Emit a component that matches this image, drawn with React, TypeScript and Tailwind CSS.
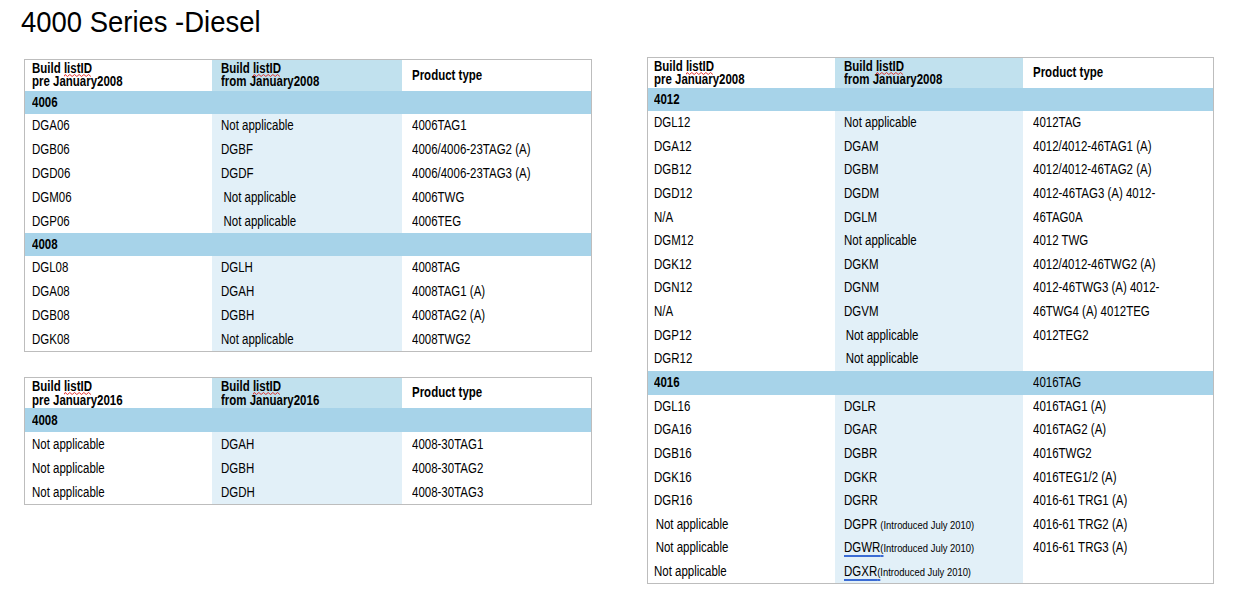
import React from 'react';

type Cell = React.ReactNode;
type Row = [Cell, Cell, Cell];
type Section = { label: string; product?: string; rows: Row[]; groupH: string };

type TableProps = {
  cols: string;
  rowH: string;
  headH: string;
  head: [string, string];
  sections: Section[];
  pad: [string, string, string];
};

// the source uses Arial Narrow, which isn't installed: squeeze Liberation Sans instead
const T = ({ children }: { children: React.ReactNode }) => (
  <span className="inline-block origin-left scale-x-[0.82] whitespace-nowrap">{children}</span>
);

const wave = Array.from({ length: 12 }, (_, i) => `L${i * 3 + 1.5} ${i % 2 ? 2.5 : 0.5}`).join(' ');

// spell-check squiggle under a word
const Squiggle = ({ children }: { children: React.ReactNode }) => (
  <span className="relative">
    {children}
    <svg
      className="absolute left-0 -bottom-[1px] w-full h-[3px] pointer-events-none"
      viewBox="0 0 36 3"
      preserveAspectRatio="none"
    >
      <path d={`M0 2.5 ${wave}`} stroke="#e0201c" strokeWidth="1" fill="none" vectorEffect="non-scaling-stroke" />
    </svg>
  </span>
);

const Intro = ({ id, gap }: { id: string; gap?: boolean }) =>
  gap ? (
    <>
      {id} <span className="text-[11.5px]">(Introduced July 2010)</span>
    </>
  ) : (
    <>
      <span className="underline decoration-[#3a6bd4] decoration-[1.5px] underline-offset-[3px]">
        {id}
        <span className="text-[11.5px]">(</span>
      </span>
      <span className="text-[11.5px]">Introduced July 2010)</span>
    </>
  );

const Table: React.FC<TableProps> = ({ cols, rowH, headH, head, sections, pad }) => {
  return (
    <div className="border border-[#bdbdbd] bg-white text-[14px] text-black">
      <div className={`grid ${cols} ${headH} font-bold leading-[13.4px]`}>
        <div className={`${pad[0]} pt-[2px]`}>
          <div className="origin-top-left scale-x-[0.82] whitespace-nowrap">
            Build <Squiggle>listID</Squiggle>
            <br />
            pre {head[0]}
          </div>
        </div>
        <div className={`${pad[1]} pt-[2px] bg-[#c1e1ee]`}>
          <div className="origin-top-left scale-x-[0.82] whitespace-nowrap">
            Build <Squiggle>listID</Squiggle>
            <br />
            from {head[1]}
          </div>
        </div>
        <div className={`${pad[2]} flex items-center`}>
          <T>Product type</T>
        </div>
      </div>
      {sections.map((s) => (
        <div key={s.label}>
          <div className={`grid ${cols} ${s.groupH} items-center bg-[#a7d3e9]`}>
            <div className={`${pad[0]} font-bold`}>
              <T>{s.label}</T>
            </div>
            <div />
            <div className={pad[2]}>{s.product && <T>{s.product}</T>}</div>
          </div>
          {s.rows.map((r, i) => (
            <div key={i} className={`grid ${cols} ${rowH}`}>
              <div className={`${pad[0]} flex items-center`}>
                <T>{r[0]}</T>
              </div>
              <div className={`${pad[1]} flex items-center bg-[#e2f0f8]`}>
                <T>{r[1]}</T>
              </div>
              <div className={`${pad[2]} flex items-center`}>
                <T>{r[2]}</T>
              </div>
            </div>
          ))}
        </div>
      ))}
    </div>
  );
};

const na = 'Not applicable';
const naShift = <span className="ml-[3px]">Not applicable</span>;
const naShift2 = <span className="ml-[2px]">Not applicable</span>;

const left2008: Section[] = [
  {
    label: '4006',
    groupH: 'h-[23px]',
    rows: [
      ['DGA06', na, '4006TAG1'],
      ['DGB06', 'DGBF', '4006/4006-23TAG2 (A)'],
      ['DGD06', 'DGDF', '4006/4006-23TAG3 (A)'],
      ['DGM06', naShift, '4006TWG'],
      ['DGP06', naShift, '4006TEG'],
    ],
  },
  {
    label: '4008',
    groupH: 'h-[23px]',
    rows: [
      ['DGL08', 'DGLH', '4008TAG'],
      ['DGA08', 'DGAH', '4008TAG1 (A)'],
      ['DGB08', 'DGBH', '4008TAG2 (A)'],
      ['DGK08', na, '4008TWG2'],
    ],
  },
];

const left2016: Section[] = [
  {
    label: '4008',
    groupH: 'h-[24px]',
    rows: [
      [na, 'DGAH', '4008-30TAG1'],
      [na, 'DGBH', '4008-30TAG2'],
      [na, 'DGDH', '4008-30TAG3'],
    ],
  },
];

const right2008: Section[] = [
  {
    label: '4012',
    groupH: 'h-[23px]',
    rows: [
      ['DGL12', na, '4012TAG'],
      ['DGA12', 'DGAM', '4012/4012-46TAG1 (A)'],
      ['DGB12', 'DGBM', '4012/4012-46TAG2 (A)'],
      ['DGD12', 'DGDM', '4012-46TAG3 (A) 4012-'],
      ['N/A', 'DGLM', '46TAG0A'],
      ['DGM12', na, '4012 TWG'],
      ['DGK12', 'DGKM', '4012/4012-46TWG2 (A)'],
      ['DGN12', 'DGNM', '4012-46TWG3 (A) 4012-'],
      ['N/A', 'DGVM', '46TWG4 (A) 4012TEG'],
      ['DGP12', naShift2, '4012TEG2'],
      ['DGR12', naShift2, ''],
    ],
  },
  {
    label: '4016',
    product: '4016TAG',
    groupH: 'h-[24px]',
    rows: [
      ['DGL16', 'DGLR', '4016TAG1 (A)'],
      ['DGA16', 'DGAR', '4016TAG2 (A)'],
      ['DGB16', 'DGBR', '4016TWG2'],
      ['DGK16', 'DGKR', '4016TEG1/2 (A)'],
      ['DGR16', 'DGRR', '4016-61 TRG1 (A)'],
      [naShift2, <Intro id="DGPR" gap />, '4016-61 TRG2 (A)'],
      [naShift2, <Intro id="DGWR" />, '4016-61 TRG3 (A)'],
      [na, <Intro id="DGXR" />, ''],
    ],
  },
];

export default function App() {
  return (
    <div
      className="w-[1238px] h-[592px] bg-white overflow-hidden"
      style={{ fontFamily: '"Liberation Sans", Arial, sans-serif' }}
    >
      <div className="h-[57px] pl-[21px] pt-[7px]">
        <h1 className="origin-left scale-x-[0.915] text-[30px] leading-none font-normal text-black whitespace-nowrap">
          4000 Series -Diesel
        </h1>
      </div>
      <div className="flex items-start">
        <div className="ml-[24px] mt-[2px] w-[568px] flex flex-col gap-[25px]">
          <Table
            cols="grid-cols-[187px_190px_189px]"
            rowH="h-[23.8px]"
            headH="h-[31px]"
            head={['January2008', 'January2008']}
            sections={left2008}
            pad={['pl-[7px]', 'pl-[9px]', 'pl-[10px]']}
          />
          <Table
            cols="grid-cols-[187px_190px_189px]"
            rowH="h-[24px]"
            headH="h-[30px]"
            head={['January2016', 'January2016']}
            sections={left2016}
            pad={['pl-[7px]', 'pl-[9px]', 'pl-[10px]']}
          />
        </div>
        <div className="ml-[55px] w-[567px]">
          <Table
            cols="grid-cols-[187px_188px_190px]"
            rowH="h-[23.6px]"
            headH="h-[30px]"
            head={['January2008', 'January2008']}
            sections={right2008}
            pad={['pl-[6px]', 'pl-[9px]', 'pl-[10px]']}
          />
        </div>
      </div>
    </div>
  );
}
